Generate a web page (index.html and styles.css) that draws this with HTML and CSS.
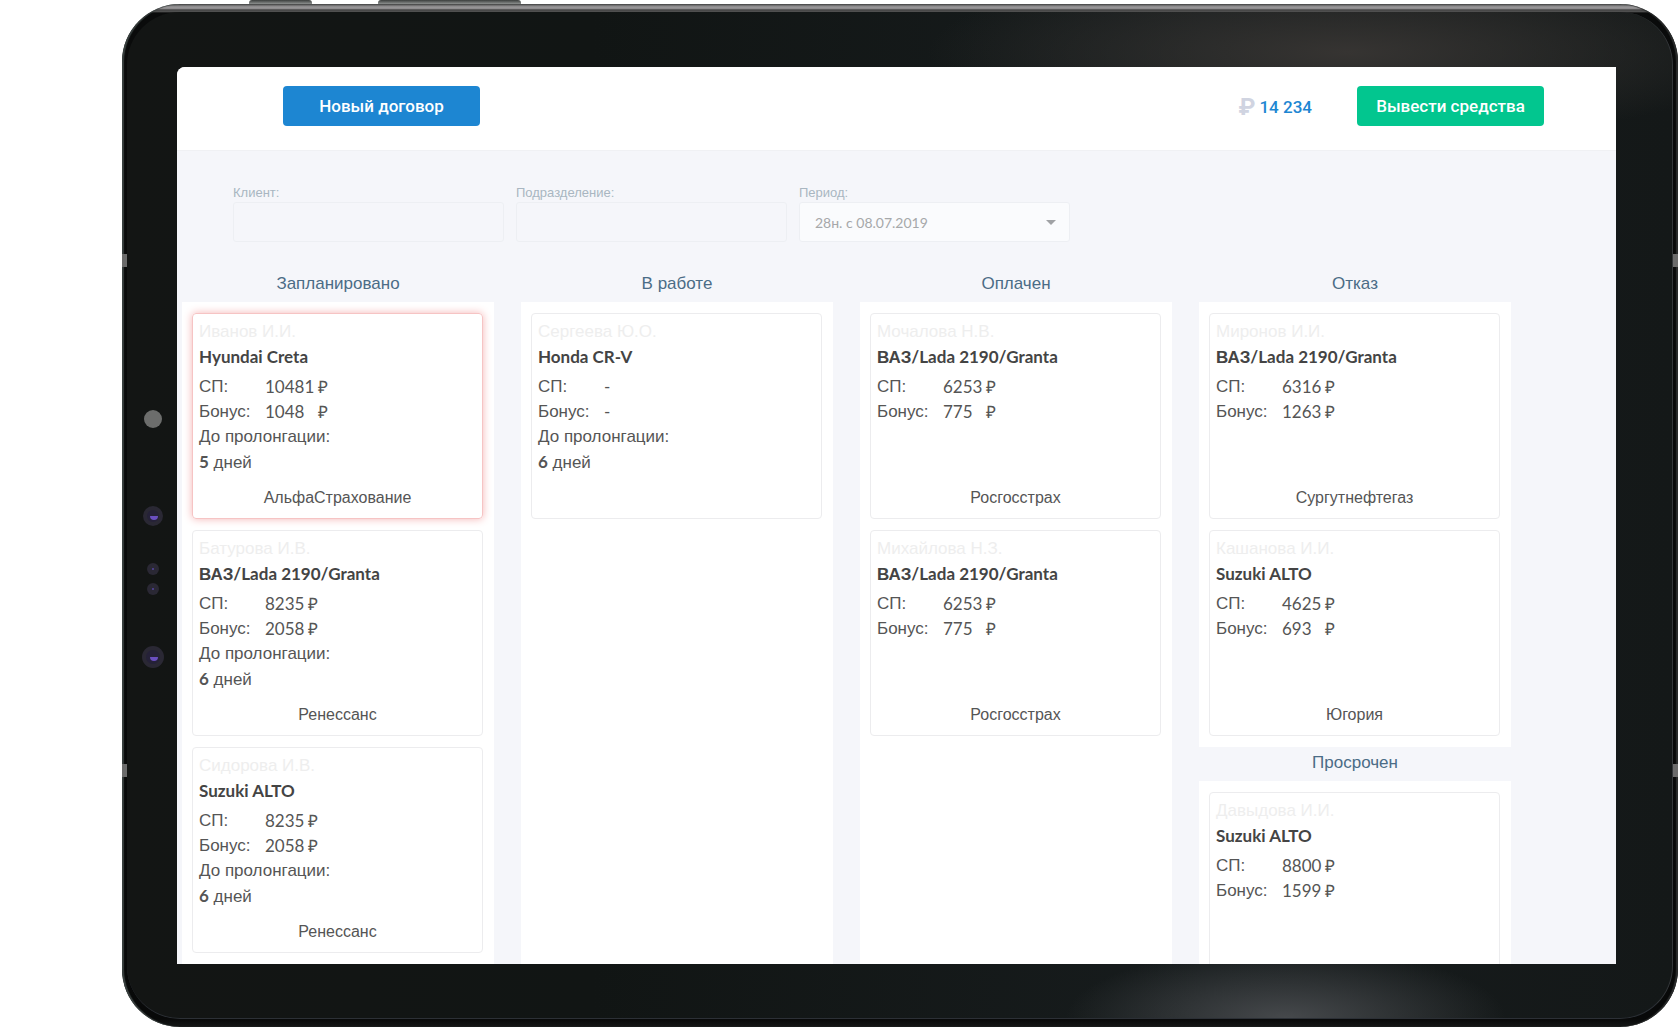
FILE: index.html
```html
<!DOCTYPE html>
<html lang="ru">
<head>
    <meta charset="UTF-8">
    <meta name="viewport" content="width=device-width, initial-scale=1">
    <title>Договоры</title>
    <link rel="stylesheet" href="styles.css">
</head>
<body>
    <div class="tablet">
        <!-- Device details -->
        <span class="side-button side-button-short"></span>
        <span class="side-button side-button-long"></span>
        <span class="glass"></span>
        <span class="antenna antenna-top antenna-left"></span>
        <span class="antenna antenna-bottom antenna-left"></span>
        <span class="antenna antenna-top antenna-right"></span>
        <span class="antenna antenna-bottom antenna-right"></span>
        <svg class="sensors" width="24" height="270" viewBox="0 0 24 270" aria-hidden="true">
            <circle cx="12" cy="19" r="9" fill="#6c6d6c"/>
            <circle cx="12" cy="116" r="10" fill="#2a2834"/>
            <circle cx="12" cy="116" r="6" fill="#252138"/>
            <path d="M9 116h8a4 4 0 0 1-8 0z" fill="#6a4fc0"/>
            <circle cx="12" cy="169" r="6" fill="#2a2834"/>
            <circle cx="12" cy="169" r="1" fill="#5545a0"/>
            <circle cx="12" cy="189" r="6" fill="#2a2834"/>
            <circle cx="12" cy="189" r="1" fill="#5545a0"/>
            <circle cx="12" cy="257" r="11" fill="#2a2834"/>
            <circle cx="12" cy="257" r="7" fill="#252138"/>
            <path d="M9 257h8a4 4 0 0 1-8 0z" fill="#6a4fc0"/>
        </svg>

        <div class="screen">
            <header class="header">
                <button type="button" class="btn btn-blue">Новый договор</button>
                <div class="balance"><span class="ruble">₽</span>14 234</div>
                <button type="button" class="btn btn-green">Вывести средства</button>
            </header>

            <form class="filters">
                <div class="field">
                    <label for="client">Клиент:</label>
                    <input type="text" id="client" name="client">
                </div>
                <div class="field">
                    <label for="department">Подразделение:</label>
                    <input type="text" id="department" name="department">
                </div>
                <div class="field">
                    <label for="period">Период:</label>
                    <select id="period" name="period">
                        <option>28н. с 08.07.2019</option>
                    </select>
                    <span class="caret"></span>
                </div>
            </form>

            <main class="board">
                <section class="column">
                    <h2>Запланировано</h2>
                    <div class="cards">
                        <article class="card card-alert">
                            <p class="name">Иванов И.И.</p>
                            <h3>Hyundai Creta</h3>
                            <table>
                                <tr><th>СП:</th><td>10481</td><td>₽</td></tr>
                                <tr><th>Бонус:</th><td>1048</td><td>₽</td></tr>
                            </table>
                            <p>До пролонгации:</p>
                            <p><b>5</b> дней</p>
                            <p class="company">АльфаСтрахование</p>
                        </article>
                        <article class="card">
                            <p class="name">Батурова И.В.</p>
                            <h3><span class="cyr">ВАЗ</span>/Lada 2190/Granta</h3>
                            <table>
                                <tr><th>СП:</th><td>8235</td><td>₽</td></tr>
                                <tr><th>Бонус:</th><td>2058</td><td>₽</td></tr>
                            </table>
                            <p>До пролонгации:</p>
                            <p><b>6</b> дней</p>
                            <p class="company">Ренессанс</p>
                        </article>
                        <article class="card">
                            <p class="name">Сидорова И.В.</p>
                            <h3>Suzuki ALTO</h3>
                            <table>
                                <tr><th>СП:</th><td>8235</td><td>₽</td></tr>
                                <tr><th>Бонус:</th><td>2058</td><td>₽</td></tr>
                            </table>
                            <p>До пролонгации:</p>
                            <p><b>6</b> дней</p>
                            <p class="company">Ренессанс</p>
                        </article>
                    </div>
                </section>

                <section class="column">
                    <h2>В работе</h2>
                    <div class="cards">
                        <article class="card">
                            <p class="name">Сергеева Ю.О.</p>
                            <h3>Honda CR-V</h3>
                            <table>
                                <tr><th>СП:</th><td>-</td></tr>
                                <tr><th>Бонус:</th><td>-</td></tr>
                            </table>
                            <p>До пролонгации:</p>
                            <p><b>6</b> дней</p>
                        </article>
                    </div>
                </section>

                <section class="column">
                    <h2>Оплачен</h2>
                    <div class="cards">
                        <article class="card">
                            <p class="name">Мочалова Н.В.</p>
                            <h3><span class="cyr">ВАЗ</span>/Lada 2190/Granta</h3>
                            <table>
                                <tr><th>СП:</th><td>6253</td><td>₽</td></tr>
                                <tr><th>Бонус:</th><td>775</td><td>₽</td></tr>
                            </table>
                            <p class="company">Росгосстрах</p>
                        </article>
                        <article class="card">
                            <p class="name">Михайлова Н.З.</p>
                            <h3><span class="cyr">ВАЗ</span>/Lada 2190/Granta</h3>
                            <table>
                                <tr><th>СП:</th><td>6253</td><td>₽</td></tr>
                                <tr><th>Бонус:</th><td>775</td><td>₽</td></tr>
                            </table>
                            <p class="company">Росгосстрах</p>
                        </article>
                    </div>
                </section>

                <section class="column">
                    <h2>Отказ</h2>
                    <div class="cards cards-short">
                        <article class="card">
                            <p class="name">Миронов И.И.</p>
                            <h3><span class="cyr">ВАЗ</span>/Lada 2190/Granta</h3>
                            <table>
                                <tr><th>СП:</th><td>6316</td><td>₽</td></tr>
                                <tr><th>Бонус:</th><td>1263</td><td>₽</td></tr>
                            </table>
                            <p class="company">Сургутнефтегаз</p>
                        </article>
                        <article class="card">
                            <p class="name">Кашанова И.И.</p>
                            <h3>Suzuki ALTO</h3>
                            <table>
                                <tr><th>СП:</th><td>4625</td><td>₽</td></tr>
                                <tr><th>Бонус:</th><td>693</td><td>₽</td></tr>
                            </table>
                            <p class="company">Югория</p>
                        </article>
                    </div>
                    <h2>Просрочен</h2>
                    <div class="cards">
                        <article class="card">
                            <p class="name">Давыдова И.И.</p>
                            <h3>Suzuki ALTO</h3>
                            <table>
                                <tr><th>СП:</th><td>8800</td><td>₽</td></tr>
                                <tr><th>Бонус:</th><td>1599</td><td>₽</td></tr>
                            </table>
                        </article>
                    </div>
                </section>
            </main>
        </div>
    </div>
</body>
</html>
```
FILE: styles.css
```css
* {
    box-sizing: border-box;
}
body {
    margin: 0;
    padding: 4px 2px 3px 122px;
    height: 100vh;
    overflow: hidden;
    background: #fff;
    color: #555;
    font-family: "Liberation Sans", Arial, sans-serif;
    font-size: 17px;
}
h2, h3, p {
    margin: 0;
}

/* Tablet body */
.tablet {
    position: relative;
    height: 100%;
    padding: 63px 62px 63px 55px;
    border-radius: 58px;
    background: linear-gradient(to bottom, #4a4a4a 0, #9a989a 3px, #8a888a 5px, #2a2a2a 6px, #666 7px, #0a0b0b 9px, #080909 calc(100% - 8px), #151717 100%);
    box-shadow: inset 2px 0 1px #39403f, inset -2px 0 1px #2a2c2c;
}
.glass {
    position: absolute;
    inset: 8px 5px 8px 5px;
    border-radius: 53px;
    border-right: 1px solid #34373a;
    border-bottom: 1px solid #2c3036;
    background:
        radial-gradient(ellipse 220px 70px at 75% 100%, #46494c, transparent),
        radial-gradient(ellipse 420px 90px at 79% 4%, #363432, transparent),
        linear-gradient(to right, #131514, #111514 30%, #171c1d 70%, #141818);
}
.side-button {
    position: absolute;
    top: -4px;
    height: 4px;
    border-radius: 3px 3px 0 0;
    background: linear-gradient(#3b3e3d, #8d908f);
}
.side-button-short {
    left: 127px;
    width: 63px;
}
.side-button-long {
    left: 256px;
    width: 143px;
}
.antenna {
    position: absolute;
    width: 5px;
    height: 13px;
    background: #6b6b6b;
}
.antenna-left {
    left: 0;
}
.antenna-right {
    right: 0;
}
.antenna-top {
    top: 250px;
}
.antenna-bottom {
    top: 760px;
}
.sensors {
    position: absolute;
    top: 396px;
    left: 19px;
}

/* Screen */
.screen {
    position: relative;
    display: flex;
    flex-direction: column;
    height: 100%;
    overflow: hidden;
    border-top-left-radius: 8px;
    background: #f5f6fa;
}
.header {
    display: flex;
    align-items: center;
    flex: none;
    height: 84px;
    padding: 0 72px 6px 106px;
    background: #fff;
    border-bottom: 1px solid #f0f1f4;
}
.btn {
    height: 40px;
    border: none;
    border-radius: 4px;
    color: #fff;
    font-family: Roboto, sans-serif;
    font-size: 17px;
    font-weight: 500;
    cursor: pointer;
}
.btn-blue {
    width: 197px;
    background: #1d86d2;
}
.btn-green {
    width: 187px;
    background: #02c68f;
}
.balance {
    display: flex;
    align-items: center;
    gap: 4px;
    margin-left: auto;
    margin-right: 45px;
    padding-top: 2px;
    color: #1d86d2;
    font-family: Roboto, sans-serif;
    font-size: 17px;
    font-weight: 500;
}
.ruble {
    color: #d0d4e1;
    font-size: 24px;
    font-weight: 700;
}

/* Filters */
.filters {
    display: flex;
    flex: none;
    gap: 12px;
    padding: 33px 56px 26px;
}
.field {
    position: relative;
    width: 271px;
}
.field label {
    display: block;
    color: #a9b6c1;
    font-size: 13px;
    line-height: 18px;
}
.field input,
.field select {
    display: block;
    width: 100%;
    height: 40px;
    padding: 0 15px;
    border: 1px solid #edeff3;
    border-radius: 3px;
    background: #f5f6fa;
    color: #a6a8aa;
    font-family: Lato, sans-serif;
    font-size: 14px;
}
.field select {
    appearance: none;
    background: #fafbfd;
}
.caret {
    position: absolute;
    right: 14px;
    bottom: 17px;
    border: 5px solid transparent;
    border-top-color: #a0a2a5;
    border-bottom: none;
    pointer-events: none;
}

/* Board */
.board {
    display: grid;
    grid-template-columns: repeat(4, 1fr);
    gap: 27px;
    flex: 1;
    min-height: 0;
    padding: 0 105px 0 5px;
}
.column {
    display: flex;
    flex-direction: column;
    min-height: 0;
}
.column h2 {
    flex: none;
    height: 34px;
    color: #4b6c86;
    font-size: 17px;
    font-weight: 400;
    line-height: 32px;
    text-align: center;
}
.cards {
    display: flex;
    flex-direction: column;
    flex: 1;
    gap: 11px;
    padding: 11px 11px 11px 10px;
    background: #fff;
}
.cards-short {
    flex: none;
}
.card {
    display: flex;
    flex-direction: column;
    flex: none;
    height: 206px;
    padding: 5px 6px 8px;
    border: 1px solid #ececee;
    border-radius: 4px;
    line-height: 25px;
}
.card-alert {
    border-color: #f6c4c4;
    box-shadow: 0 0 8px #f5b5b5;
}
.name {
    color: #eee;
}
.card h3 {
    height: 25px;
    margin-bottom: 5px;
    color: #444;
    font-family: Lato, sans-serif;
    font-size: 17px;
    font-weight: 700;
}
.cyr {
    font-family: "Liberation Sans", Arial, sans-serif;
}
.card table {
    align-self: flex-start;
    border-collapse: collapse;
}
.card tr {
    height: 25px;
}
.card th {
    width: 66px;
    padding: 0;
    font-weight: 400;
    text-align: left;
}
.card td {
    padding: 0 4px 0 0;
    font-family: Lato, sans-serif;
}
.card th,
.card td {
    vertical-align: middle;
}
.card b {
    font-family: Lato, sans-serif;
}
.card .company {
    margin-top: auto;
    font-size: 16px;
    text-align: center;
}
```
